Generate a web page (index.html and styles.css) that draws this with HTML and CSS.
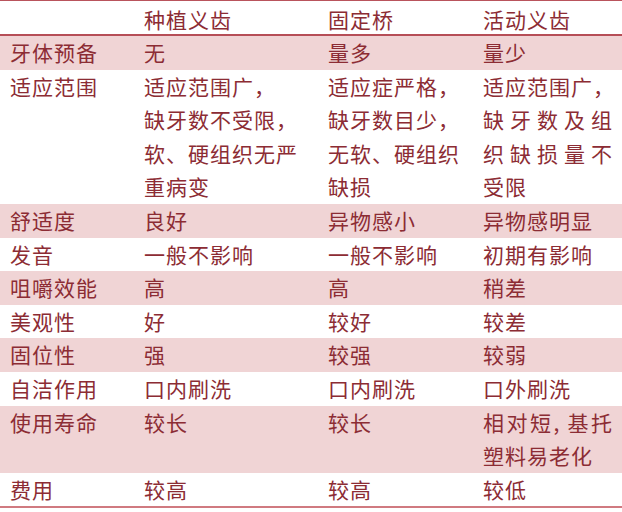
FILE: index.html
```html
<!DOCTYPE html>
<html lang="zh-CN">
<head>
<meta charset="utf-8">
<title>种植义齿 固定桥 活动义齿 对比</title>
<link rel="stylesheet" href="styles.css">
</head>
<body>
<table class="cmp">
  <colgroup>
    <col class="c1"><col class="c2"><col class="c3"><col class="c4">
  </colgroup>
  <thead>
    <tr><th></th><th>种植义齿</th><th>固定桥</th><th>活动义齿</th></tr>
  </thead>
  <tbody>
    <tr class="pink"><td>牙体预备</td><td>无</td><td>量多</td><td>量少</td></tr>
    <tr><td>适应范围</td>
      <td>适应范围广，<br>缺牙数不受限，<br>软、硬组织无严<br>重病变</td>
      <td>适应症严格，<br>缺牙数目少，<br>无软、硬组织<br>缺损</td>
      <td>适应范围广，<span class="just">缺牙数及组</span><span class="just">织缺损量不</span>受限</td>
    </tr>
    <tr class="pink"><td>舒适度</td><td>良好</td><td>异物感小</td><td>异物感明显</td></tr>
    <tr><td>发音</td><td>一般不影响</td><td>一般不影响</td><td>初期有影响</td></tr>
    <tr class="pink"><td>咀嚼效能</td><td>高</td><td>高</td><td>稍差</td></tr>
    <tr><td>美观性</td><td>好</td><td>较好</td><td>较差</td></tr>
    <tr class="pink"><td>固位性</td><td>强</td><td>较强</td><td>较弱</td></tr>
    <tr><td>自洁作用</td><td>口内刷洗</td><td>口内刷洗</td><td>口外刷洗</td></tr>
    <tr class="pink"><td>使用寿命</td><td>较长</td><td>较长</td><td><span class="just">相对短, 基托</span>塑料易老化</td></tr>
    <tr class="last"><td>费用</td><td>较高</td><td>较高</td><td>较低</td></tr>
  </tbody>
</table>
</body>
</html>
```
FILE: styles.css
```css
html, body {
  margin: 0;
  padding: 0;
  background: #ffffff;
}

.cmp {
  width: 622px;
  border-collapse: collapse;
  table-layout: fixed;
  font-family: "Noto Sans CJK SC", "Noto Sans", sans-serif;
  font-size: 21px;
  letter-spacing: 1px;
  color: #8c2c34;
}

.c1 { width: 134px; }
.c2 { width: 184px; }
.c3 { width: 155px; }
.c4 { width: 149px; }

.cmp thead th {
  font-weight: normal;
  text-align: left;
  padding: 4px 0 0 10px;
  line-height: 29px;
  border-top: 1px solid #b9545c;
  border-bottom: 2px solid #b64e57;
}

.cmp td {
  padding: 0 9px 0 10px;
  vertical-align: top;
  line-height: 33.6px;
  white-space: nowrap;
}

.cmp tr.pink td {
  background: #f0d4d5;
}

.cmp tr.last td {
  border-bottom: 2px solid #d07a80;
}

.just {
  display: block;
  text-align: justify;
  text-align-last: justify;
  white-space: nowrap;
}
```
